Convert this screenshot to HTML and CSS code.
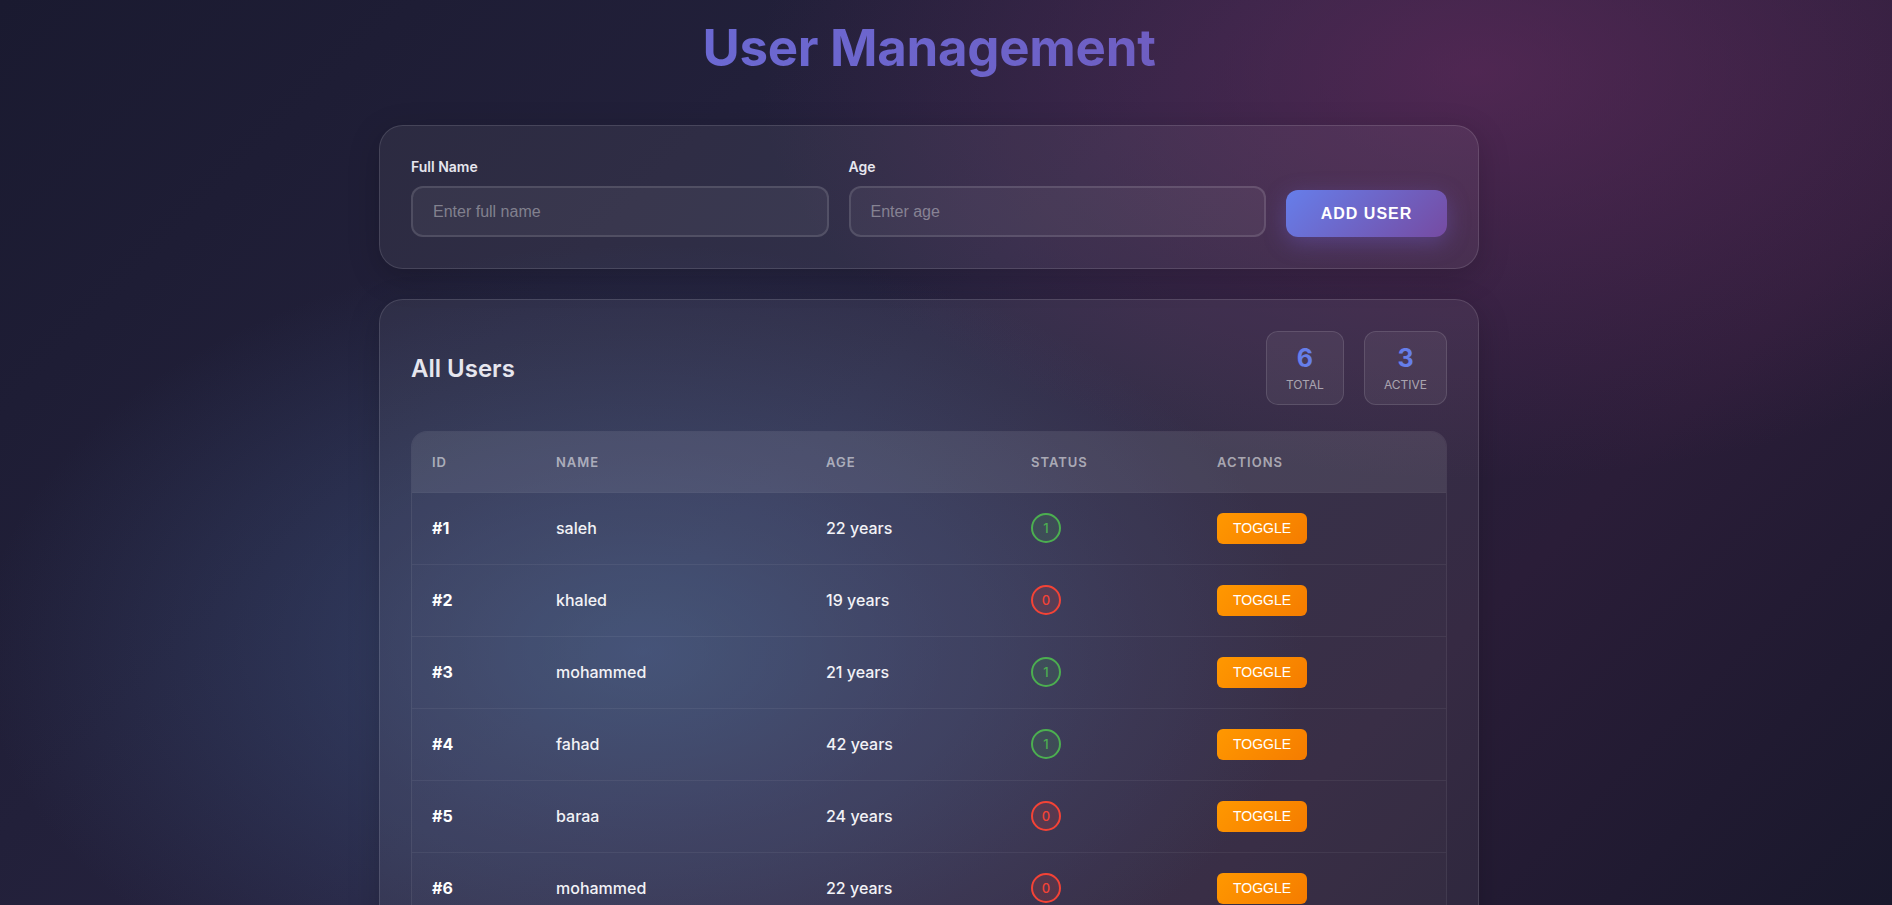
FILE: index.html
```html
<!DOCTYPE html>
<html lang="en">
<head>
<meta charset="utf-8">
<title>User Management</title>
<link rel="stylesheet" href="styles.css">
</head>
<body>
<div class="page">
  <h1 class="title">User Management</h1>

  <div class="card form-card">
    <div class="field">
      <label class="label" for="name">Full Name</label>
      <input class="input" id="name" type="text" placeholder="Enter full name">
    </div>
    <div class="field">
      <label class="label" for="age">Age</label>
      <input class="input" id="age" type="text" placeholder="Enter age">
    </div>
    <button class="btn-add" type="button">ADD USER</button>
  </div>

  <div class="card list-card">
    <div class="list-head">
      <h2 class="list-title">All Users</h2>
      <div class="stats">
        <div class="stat"><span class="stat-num">6</span><span class="stat-lbl">Total</span></div>
        <div class="stat"><span class="stat-num">3</span><span class="stat-lbl">Active</span></div>
      </div>
    </div>

    <div class="table-wrap">
      <table class="users">
        <colgroup>
          <col class="c-id"><col class="c-name"><col class="c-age"><col class="c-status"><col class="c-actions">
        </colgroup>
        <thead>
          <tr><th>ID</th><th>Name</th><th>Age</th><th>Status</th><th>Actions</th></tr>
        </thead>
        <tbody>
          <tr><td class="id">#1</td><td>saleh</td><td>22 years</td><td><span class="badge on">1</span></td><td><button class="btn-toggle" type="button">TOGGLE</button></td></tr>
          <tr><td class="id">#2</td><td>khaled</td><td>19 years</td><td><span class="badge off">0</span></td><td><button class="btn-toggle" type="button">TOGGLE</button></td></tr>
          <tr><td class="id">#3</td><td>mohammed</td><td>21 years</td><td><span class="badge on">1</span></td><td><button class="btn-toggle" type="button">TOGGLE</button></td></tr>
          <tr><td class="id">#4</td><td>fahad</td><td>42 years</td><td><span class="badge on">1</span></td><td><button class="btn-toggle" type="button">TOGGLE</button></td></tr>
          <tr><td class="id">#5</td><td>baraa</td><td>24 years</td><td><span class="badge off">0</span></td><td><button class="btn-toggle" type="button">TOGGLE</button></td></tr>
          <tr><td class="id">#6</td><td>mohammed</td><td>22 years</td><td><span class="badge off">0</span></td><td><button class="btn-toggle" type="button">TOGGLE</button></td></tr>
        </tbody>
      </table>
    </div>
  </div>
</div>
</body>
</html>
```

FILE: styles.css
```css
* { box-sizing: border-box; }

::-webkit-scrollbar { width: 8px; }
::-webkit-scrollbar-track { background: #17162b; }
::-webkit-scrollbar-thumb { background: #4a4a5c; border-radius: 4px; }

html {
  min-height: 100%;
  background: #1a1a2e;
}

body {
  margin: 0;
  padding: 0 34px 16px 0;
  min-height: 100vh;
  font-family: Inter, "Noto Sans", sans-serif;
  color: #e8e8f0;
  background:
    radial-gradient(ellipse 38% 45% at 78% 8%, rgba(112, 44, 100, 0.55) 0%, rgba(112, 44, 100, 0) 100%),
    radial-gradient(ellipse 35% 45% at 34% 72%, rgba(70, 100, 150, 0.55) 0%, rgba(70, 100, 150, 0) 100%),
    linear-gradient(135deg, #1a1a30 0%, #26233f 45%, #2a1d38 75%, #19182c 100%);
  background-attachment: fixed;
}

.page {
  max-width: 1100px;
  margin: 0 auto;
  padding-top: 18px;
}

.title {
  margin: 0 0 47px;
  text-align: center;
  font-size: 51px;
  line-height: 60px;
  font-weight: 700;
  letter-spacing: -0.3px;
  background: linear-gradient(90deg, #6a6fdc 0%, #6d62c8 60%, #7452b0 100%);
  -webkit-background-clip: text;
  background-clip: text;
  color: transparent;
}

.card {
  background: rgba(255, 255, 255, 0.06);
  border: 1px solid rgba(255, 255, 255, 0.12);
  border-radius: 24px;
  box-shadow: 0 8px 32px rgba(0, 0, 0, 0.18);
  padding: 31px 31px;
}

.form-card {
  display: grid;
  grid-template-columns: 1fr 1fr 161px;
  gap: 20px;
  align-items: end;
  margin-bottom: 30px;
}

.field { display: flex; flex-direction: column; }

.label {
  font-size: 14px;
  line-height: 20px;
  font-weight: 600;
  color: #e6e6ee;
  margin-bottom: 9px;
}

.input {
  height: 51px;
  padding: 0 20px;
  font-family: "Liberation Sans", Arial, sans-serif;
  font-size: 16px;
  color: #fff;
  background: rgba(255, 255, 255, 0.05);
  border: 2px solid rgba(255, 255, 255, 0.12);
  border-radius: 12px;
  outline: none;
}
.input::placeholder { color: rgba(255, 255, 255, 0.38); }

.btn-add {
  height: 47px;
  border: none;
  border-radius: 12px;
  font-family: "Liberation Sans", Arial, sans-serif;
  font-size: 16px;
  font-weight: 700;
  letter-spacing: 1px;
  color: #fff;
  background: linear-gradient(135deg, #667eea 0%, #764ba2 100%);
  box-shadow: 0 6px 22px rgba(118, 100, 220, 0.35);
}

.list-head {
  display: flex;
  justify-content: space-between;
  align-items: center;
  margin-bottom: 26px;
}

.list-title {
  margin: 0;
  font-size: 24px;
  font-weight: 600;
  color: #e6e6ee;
}

.stats { display: flex; gap: 20px; }

.stat {
  display: flex;
  flex-direction: column;
  align-items: center;
  padding: 11px 19px 11px;
  background: rgba(255, 255, 255, 0.06);
  border: 1px solid rgba(255, 255, 255, 0.12);
  border-radius: 12px;
}

.stat-num {
  font-size: 25px;
  line-height: 30px;
  font-weight: 700;
  color: #667eea;
}

.stat-lbl {
  margin-top: 4px;
  font-size: 12px;
  line-height: 16px;
  text-transform: uppercase;
  color: rgba(255, 255, 255, 0.55);
}

.table-wrap {
  border: 1px solid rgba(255, 255, 255, 0.07);
  border-radius: 16px;
  overflow: hidden;
  background: rgba(255, 255, 255, 0.02);
}

.users {
  width: 100%;
  border-collapse: collapse;
  table-layout: fixed;
}

.c-id { width: 124px; }
.c-name { width: 270px; }
.c-age { width: 205px; }
.c-status { width: 186px; }

.users thead tr { background: rgba(255, 255, 255, 0.08); }

.users th {
  height: 60px;
  padding: 0 20px;
  text-align: left;
  font-size: 13px;
  font-weight: 600;
  letter-spacing: 1px;
  text-transform: uppercase;
  color: rgba(255, 255, 255, 0.55);
  border-bottom: 1px solid rgba(255, 255, 255, 0.1);
}

.users td {
  height: 72px;
  padding: 0 20px;
  font-size: 16px;
  font-weight: 500;
  color: #f2f2f6;
  border-bottom: 1px solid rgba(255, 255, 255, 0.06);
}

.users td.id { font-weight: 700; color: #fff; }

.badge {
  display: inline-flex;
  align-items: center;
  justify-content: center;
  width: 30px;
  height: 30px;
  border-radius: 50%;
  font-size: 13px;
  font-weight: 500;
}
.badge.on { color: #4caf50; border: 2px solid #4caf50; background: rgba(76, 175, 80, 0.15); }
.badge.off { color: #f44336; border: 2px solid #f44336; background: rgba(244, 67, 54, 0.15); }

.btn-toggle {
  height: 31px;
  padding: 0 16px;
  border: none;
  border-radius: 6px;
  font-family: "Liberation Sans", Arial, sans-serif;
  font-size: 14px;
  font-weight: 400;
  color: #fff;
  background: linear-gradient(135deg, #ff9800 0%, #f57c00 100%);
}
```
